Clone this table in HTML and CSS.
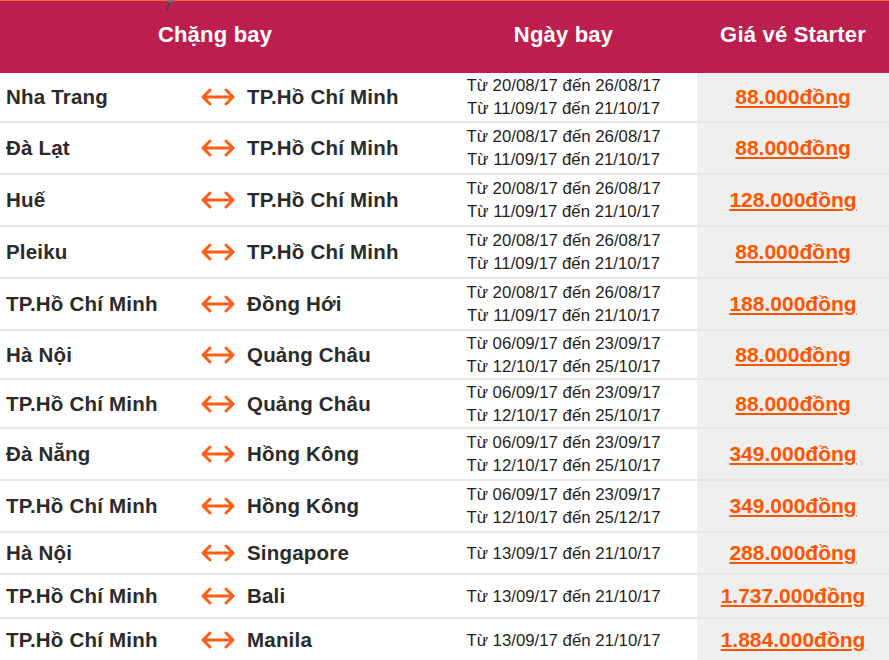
FILE: index.html
```html
<!DOCTYPE html>
<html lang="vi">
<head>
<meta charset="utf-8">
<title>Giá vé Starter</title>
<link rel="stylesheet" href="styles.css">
</head>
<body>
<div class="wrap">
  <span class="pin"><svg width="10" height="14" viewBox="0 0 10 14"><path d="M3 13 L6 6" stroke="#444" stroke-width="2" stroke-linecap="round"/><circle cx="6.5" cy="4" r="3" fill="#6a6a6a"/><circle cx="6" cy="3.5" r="1.2" fill="#aaa"/></svg></span>
  <table class="fares">
    <colgroup>
      <col class="c-from"><col class="c-arrow"><col class="c-to"><col class="c-date"><col class="c-price">
    </colgroup>
    <thead>
      <tr class="head">
        <th colspan="3">Chặng bay</th>
        <th>Ngày bay</th>
        <th>Giá vé Starter</th>
      </tr>
    </thead>
    <tbody>
      <tr class="h50">
        <td class="city">Nha Trang</td><td class="arrow"><svg viewBox="0 0 36 18" width="36" height="18"><path d="M3 9H33M10 2L3 9L10 16M26 2L33 9L26 16"/></svg></td><td class="city">TP.Hồ Chí Minh</td>
        <td class="date">Từ 20/08/17 đến 26/08/17<br>Từ 11/09/17 đến 21/10/17</td>
        <td class="price"><a href="#">88.000đồng</a></td>
      </tr>
      <tr class="h52">
        <td class="city">Đà Lạt</td><td class="arrow"><svg viewBox="0 0 36 18" width="36" height="18"><path d="M3 9H33M10 2L3 9L10 16M26 2L33 9L26 16"/></svg></td><td class="city">TP.Hồ Chí Minh</td>
        <td class="date">Từ 20/08/17 đến 26/08/17<br>Từ 11/09/17 đến 21/10/17</td>
        <td class="price"><a href="#">88.000đồng</a></td>
      </tr>
      <tr class="h52">
        <td class="city">Huế</td><td class="arrow"><svg viewBox="0 0 36 18" width="36" height="18"><path d="M3 9H33M10 2L3 9L10 16M26 2L33 9L26 16"/></svg></td><td class="city">TP.Hồ Chí Minh</td>
        <td class="date">Từ 20/08/17 đến 26/08/17<br>Từ 11/09/17 đến 21/10/17</td>
        <td class="price"><a href="#">128.000đồng</a></td>
      </tr>
      <tr class="h52">
        <td class="city">Pleiku</td><td class="arrow"><svg viewBox="0 0 36 18" width="36" height="18"><path d="M3 9H33M10 2L3 9L10 16M26 2L33 9L26 16"/></svg></td><td class="city">TP.Hồ Chí Minh</td>
        <td class="date">Từ 20/08/17 đến 26/08/17<br>Từ 11/09/17 đến 21/10/17</td>
        <td class="price"><a href="#">88.000đồng</a></td>
      </tr>
      <tr class="h52">
        <td class="city">TP.Hồ Chí Minh</td><td class="arrow"><svg viewBox="0 0 36 18" width="36" height="18"><path d="M3 9H33M10 2L3 9L10 16M26 2L33 9L26 16"/></svg></td><td class="city">Đồng Hới</td>
        <td class="date">Từ 20/08/17 đến 26/08/17<br>Từ 11/09/17 đến 21/10/17</td>
        <td class="price"><a href="#">188.000đồng</a></td>
      </tr>
      <tr class="h49">
        <td class="city">Hà Nội</td><td class="arrow"><svg viewBox="0 0 36 18" width="36" height="18"><path d="M3 9H33M10 2L3 9L10 16M26 2L33 9L26 16"/></svg></td><td class="city">Quảng Châu</td>
        <td class="date">Từ 06/09/17 đến 23/09/17<br>Từ 12/10/17 đến 25/10/17</td>
        <td class="price"><a href="#">88.000đồng</a></td>
      </tr>
      <tr class="h49">
        <td class="city">TP.Hồ Chí Minh</td><td class="arrow"><svg viewBox="0 0 36 18" width="36" height="18"><path d="M3 9H33M10 2L3 9L10 16M26 2L33 9L26 16"/></svg></td><td class="city">Quảng Châu</td>
        <td class="date">Từ 06/09/17 đến 23/09/17<br>Từ 12/10/17 đến 25/10/17</td>
        <td class="price"><a href="#">88.000đồng</a></td>
      </tr>
      <tr class="h52">
        <td class="city">Đà Nẵng</td><td class="arrow"><svg viewBox="0 0 36 18" width="36" height="18"><path d="M3 9H33M10 2L3 9L10 16M26 2L33 9L26 16"/></svg></td><td class="city">Hồng Kông</td>
        <td class="date">Từ 06/09/17 đến 23/09/17<br>Từ 12/10/17 đến 25/10/17</td>
        <td class="price"><a href="#">349.000đồng</a></td>
      </tr>
      <tr class="h52">
        <td class="city">TP.Hồ Chí Minh</td><td class="arrow"><svg viewBox="0 0 36 18" width="36" height="18"><path d="M3 9H33M10 2L3 9L10 16M26 2L33 9L26 16"/></svg></td><td class="city">Hồng Kông</td>
        <td class="date">Từ 06/09/17 đến 23/09/17<br>Từ 12/10/17 đến 25/12/17</td>
        <td class="price"><a href="#">349.000đồng</a></td>
      </tr>
      <tr class="h42">
        <td class="city">Hà Nội</td><td class="arrow"><svg viewBox="0 0 36 18" width="36" height="18"><path d="M3 9H33M10 2L3 9L10 16M26 2L33 9L26 16"/></svg></td><td class="city">Singapore</td>
        <td class="date">Từ 13/09/17 đến 21/10/17</td>
        <td class="price"><a href="#">288.000đồng</a></td>
      </tr>
      <tr class="h44">
        <td class="city">TP.Hồ Chí Minh</td><td class="arrow"><svg viewBox="0 0 36 18" width="36" height="18"><path d="M3 9H33M10 2L3 9L10 16M26 2L33 9L26 16"/></svg></td><td class="city">Bali</td>
        <td class="date">Từ 13/09/17 đến 21/10/17</td>
        <td class="price"><a href="#">1.737.000đồng</a></td>
      </tr>
      <tr class="h44">
        <td class="city">TP.Hồ Chí Minh</td><td class="arrow"><svg viewBox="0 0 36 18" width="36" height="18"><path d="M3 9H33M10 2L3 9L10 16M26 2L33 9L26 16"/></svg></td><td class="city">Manila</td>
        <td class="date">Từ 13/09/17 đến 21/10/17</td>
        <td class="price"><a href="#">1.884.000đồng</a></td>
      </tr>
    </tbody>
  </table>
</div>
</body>
</html>
```

FILE: styles.css
```css
html, body {
  margin: 0;
  padding: 0;
  background: #ffffff;
}
body {
  font-family: "Liberation Sans", Arial, sans-serif;
  overflow: hidden;
}
.wrap {
  position: relative;
  width: 889px;
}
.pin {
  position: absolute;
  left: 164px;
  top: -4px;
  line-height: 0;
}
.fares {
  width: 889px;
  border-collapse: collapse;
  table-layout: fixed;
}
.c-from { width: 190px; }
.c-arrow { width: 57px; }
.c-to { width: 183px; }
.c-date { width: 267px; }
.c-price { width: 192px; }

.head th {
  background: #bc1f4e;
  border-top: 1px solid #f0683a;
  height: 68px;
  padding: 0 0 4px 0;
  color: #ffffff;
  font-size: 22px;
  font-weight: bold;
  text-align: center;
  vertical-align: middle;
  letter-spacing: 0.2px;
}
tbody tr {
  border-bottom: 2px solid #e6e6e6;
}
tbody td {
  padding: 0;
  vertical-align: middle;
}
.h50 td { height: 48px; }
.h52 td { height: 50px; }
.h49 td { height: 47px; }
.h42 td { height: 40px; }
.h44 td { height: 42px; }

.city {
  font-size: 20.5px;
  font-weight: bold;
  color: #2b2b2b;
  white-space: nowrap;
  letter-spacing: 0.2px;
}
tbody td:first-child {
  padding-left: 6px;
}
.arrow {
  padding-left: 10px;
  line-height: 0;
}
.arrow svg {
  display: block;
  fill: none;
  stroke: #ff5f14;
  stroke-width: 3;
  stroke-linecap: round;
  stroke-linejoin: round;
}
.date {
  font-size: 16.8px;
  line-height: 23px;
  color: #1f1f1f;
  text-align: center;
  white-space: nowrap;
}
.price {
  background: #efefef;
  text-align: center;
}
.price a {
  font-size: 21px;
  font-weight: bold;
  color: #ff5500;
  text-decoration: underline;
  text-decoration-thickness: 2px;
  text-underline-offset: 2px;
}
```
